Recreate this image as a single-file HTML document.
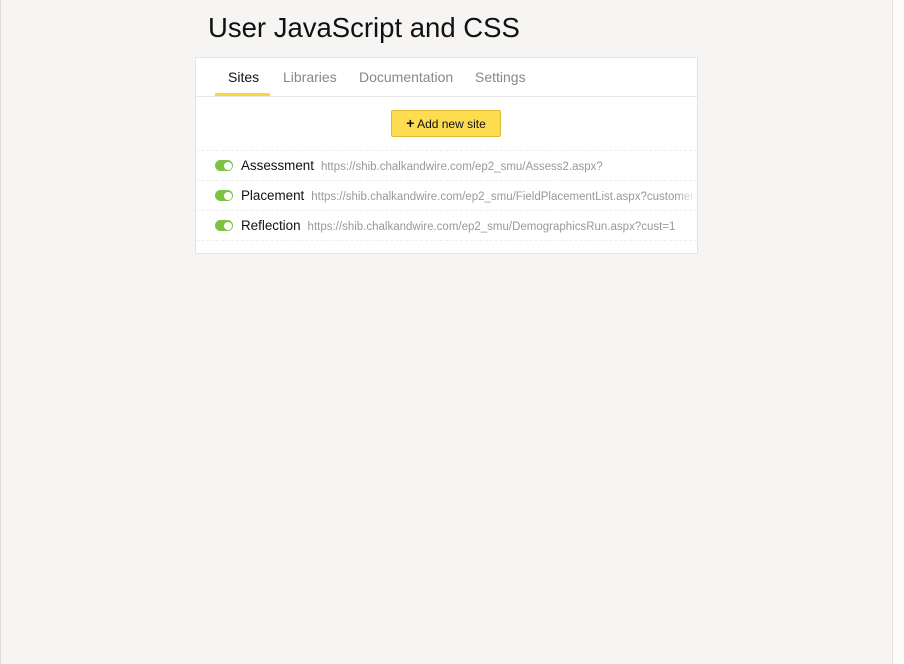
<!DOCTYPE html>
<html><head><style>
*{box-sizing:border-box;margin:0;padding:0}
body{width:904px;height:664px;background:#f6f5f3;font-family:"Liberation Sans",sans-serif;position:relative;overflow:hidden}
.lb{position:absolute;left:0;top:0;width:1px;height:664px;background:#ddd}
.rb{position:absolute;left:892px;top:0;width:12px;height:664px;background:#fbfbfa;border-left:1px solid #e6e5e3}
h1{position:absolute;left:208px;top:12px;font-size:27.5px;font-weight:normal;color:#111}
.card{position:absolute;left:195px;top:57px;width:503px;height:197px;background:#fff;border:1px solid #e4e4e4}
.tabs{height:39px;border-bottom:1px solid #e8e8e8;position:relative}
.tab{position:absolute;top:11px;font-size:14px;color:#888}
.tab.a{color:#111}
.ul{position:absolute;left:19px;top:35px;width:55px;height:3px;background:#fbd53b}
.btn{position:absolute;left:195px;top:52px;width:110px;height:27px;background:#fddc4f;border:1px solid #e0bc30;border-radius:2px;font-size:12px;color:#111;text-align:center;line-height:25px}
.row{position:absolute;left:0;width:501px;height:30px;border-top:1px dashed #eee;white-space:nowrap;overflow:hidden}
.tg{position:absolute;left:19px;top:9px;width:18px;height:11px;border-radius:6px;background:#7dc242}
.tg:after{content:"";position:absolute;right:1.5px;top:1.5px;width:8px;height:8px;border-radius:50%;background:#fff}
.nm{position:absolute;left:45px;top:7px;font-size:13.4px;color:#111}
.u{color:#999;font-size:11.5px;margin-left:7px}
.fade{position:absolute;right:0;top:0;width:20px;height:29px;background:linear-gradient(to right,rgba(255,255,255,0),#fff)}
</style></head><body>
<div class="lb"></div><div class="rb"></div>
<h1>User JavaScript and CSS</h1>
<div class="card">
<div class="tabs">
<span class="tab a" style="left:32px">Sites</span>
<span class="tab" style="left:87px">Libraries</span>
<span class="tab" style="left:163px">Documentation</span>
<span class="tab" style="left:279px">Settings</span>
<div class="ul"></div>
</div>
<div class="btn"><b style="font-size:14px">+</b> Add new site</div>
<div class="row" style="top:92px"><div class="tg"></div><div class="nm">Assessment<span class="u">https://shib.chalkandwire.com/ep2_smu/Assess2.aspx?</span></div></div>
<div class="row" style="top:122px"><div class="tg"></div><div class="nm">Placement<span class="u">https://shib.chalkandwire.com/ep2_smu/FieldPlacementList.aspx?customer=1</span></div><div class="fade"></div></div>
<div class="row" style="top:152px"><div class="tg"></div><div class="nm">Reflection<span class="u">https://shib.chalkandwire.com/ep2_smu/DemographicsRun.aspx?cust=1</span></div><div class="fade"></div></div>
<div class="row" style="top:182px"></div>
</div>
</body></html>
